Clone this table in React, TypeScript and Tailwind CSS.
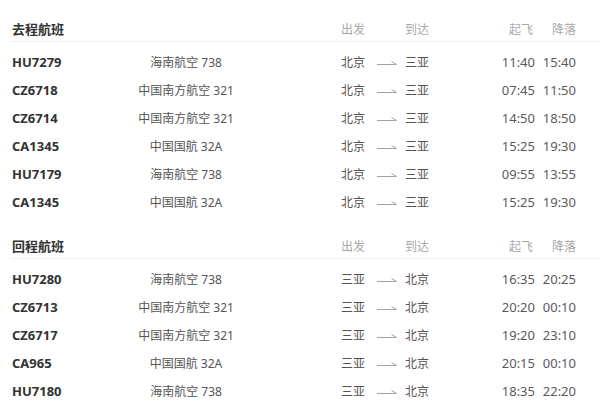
import React from 'react';

type Flight = { no: string; plane: string; from: string; to: string; dep: string; arr: string };

const outbound: Flight[] = [
  { no: 'HU7279', plane: '海南航空 738', from: '北京', to: '三亚', dep: '11:40', arr: '15:40' },
  { no: 'CZ6718', plane: '中国南方航空 321', from: '北京', to: '三亚', dep: '07:45', arr: '11:50' },
  { no: 'CZ6714', plane: '中国南方航空 321', from: '北京', to: '三亚', dep: '14:50', arr: '18:50' },
  { no: 'CA1345', plane: '中国国航 32A', from: '北京', to: '三亚', dep: '15:25', arr: '19:30' },
  { no: 'HU7179', plane: '海南航空 738', from: '北京', to: '三亚', dep: '09:55', arr: '13:55' },
  { no: 'CA1345', plane: '中国国航 32A', from: '北京', to: '三亚', dep: '15:25', arr: '19:30' },
];

const inbound: Flight[] = [
  { no: 'HU7280', plane: '海南航空 738', from: '三亚', to: '北京', dep: '16:35', arr: '20:25' },
  { no: 'CZ6713', plane: '中国南方航空 321', from: '三亚', to: '北京', dep: '20:20', arr: '00:10' },
  { no: 'CZ6717', plane: '中国南方航空 321', from: '三亚', to: '北京', dep: '19:20', arr: '23:10' },
  { no: 'CA965', plane: '中国国航 32A', from: '三亚', to: '北京', dep: '20:15', arr: '00:10' },
  { no: 'HU7180', plane: '海南航空 738', from: '三亚', to: '北京', dep: '18:35', arr: '22:20' },
];

const Arrow = () => (
  <svg width="22" height="8" viewBox="0 0 22 8" fill="none">
    <path d="M1 5.5H20.5M15.5 2.5L20.5 5.5" stroke="#a3a3a3" strokeWidth="1" />
  </svg>
);

function Section({ title, flights, className }: { title: string; flights: Flight[]; className?: string }) {
  return (
    <section className={className}>
      {/* 标题行 */}
      <div className="ml-[10px] flex h-[24px] items-center border-b border-[#efefef] text-[12px]">
        <div className="w-[322px] pl-[2px] text-[13px] font-semibold text-[#333]">{title}</div>
        <div className="w-[73px] pl-[9px] text-[#a8a8a8]">出发</div>
        <div className="w-[40px] text-[#a8a8a8]">到达</div>
        <div className="ml-auto w-[40px] text-right text-[#a8a8a8]">起飞</div>
        <div className="mr-[24px] w-[43px] text-right text-[#a8a8a8]">降落</div>
      </div>
      <div className="mt-[7px]">
        {flights.map((f, i) => (
          <div key={i} className="flex h-[28px] items-center pl-[12px] pr-[24px] text-[12px] text-[#555]">
            <div className="w-[110px] text-[13px] font-bold text-[#333]">{f.no}</div>
            <div className="w-[128px] text-center">{f.plane}</div>
            <div className="ml-[91px] w-[34px]">{f.from}</div>
            <div className="flex w-[30px] items-center pl-[1px]">
              <Arrow />
            </div>
            <div className="w-[40px]">{f.to}</div>
            <div className="ml-auto w-[40px] text-right text-[13px] text-[#5a5a5a]">{f.dep}</div>
            <div className="w-[41px] text-right text-[13px] text-[#5a5a5a]">{f.arr}</div>
          </div>
        ))}
      </div>
    </section>
  );
}

export default function App() {
  return (
    <div
      className="h-[410px] w-[600px] overflow-hidden bg-white pt-[18px]"
      style={{ fontFamily: '"Noto Sans", "Noto Sans CJK SC", sans-serif' }}
    >
      <Section title="去程航班" flights={outbound} />
      <Section title="回程航班" flights={inbound} className="mt-[18px]" />
    </div>
  );
}
